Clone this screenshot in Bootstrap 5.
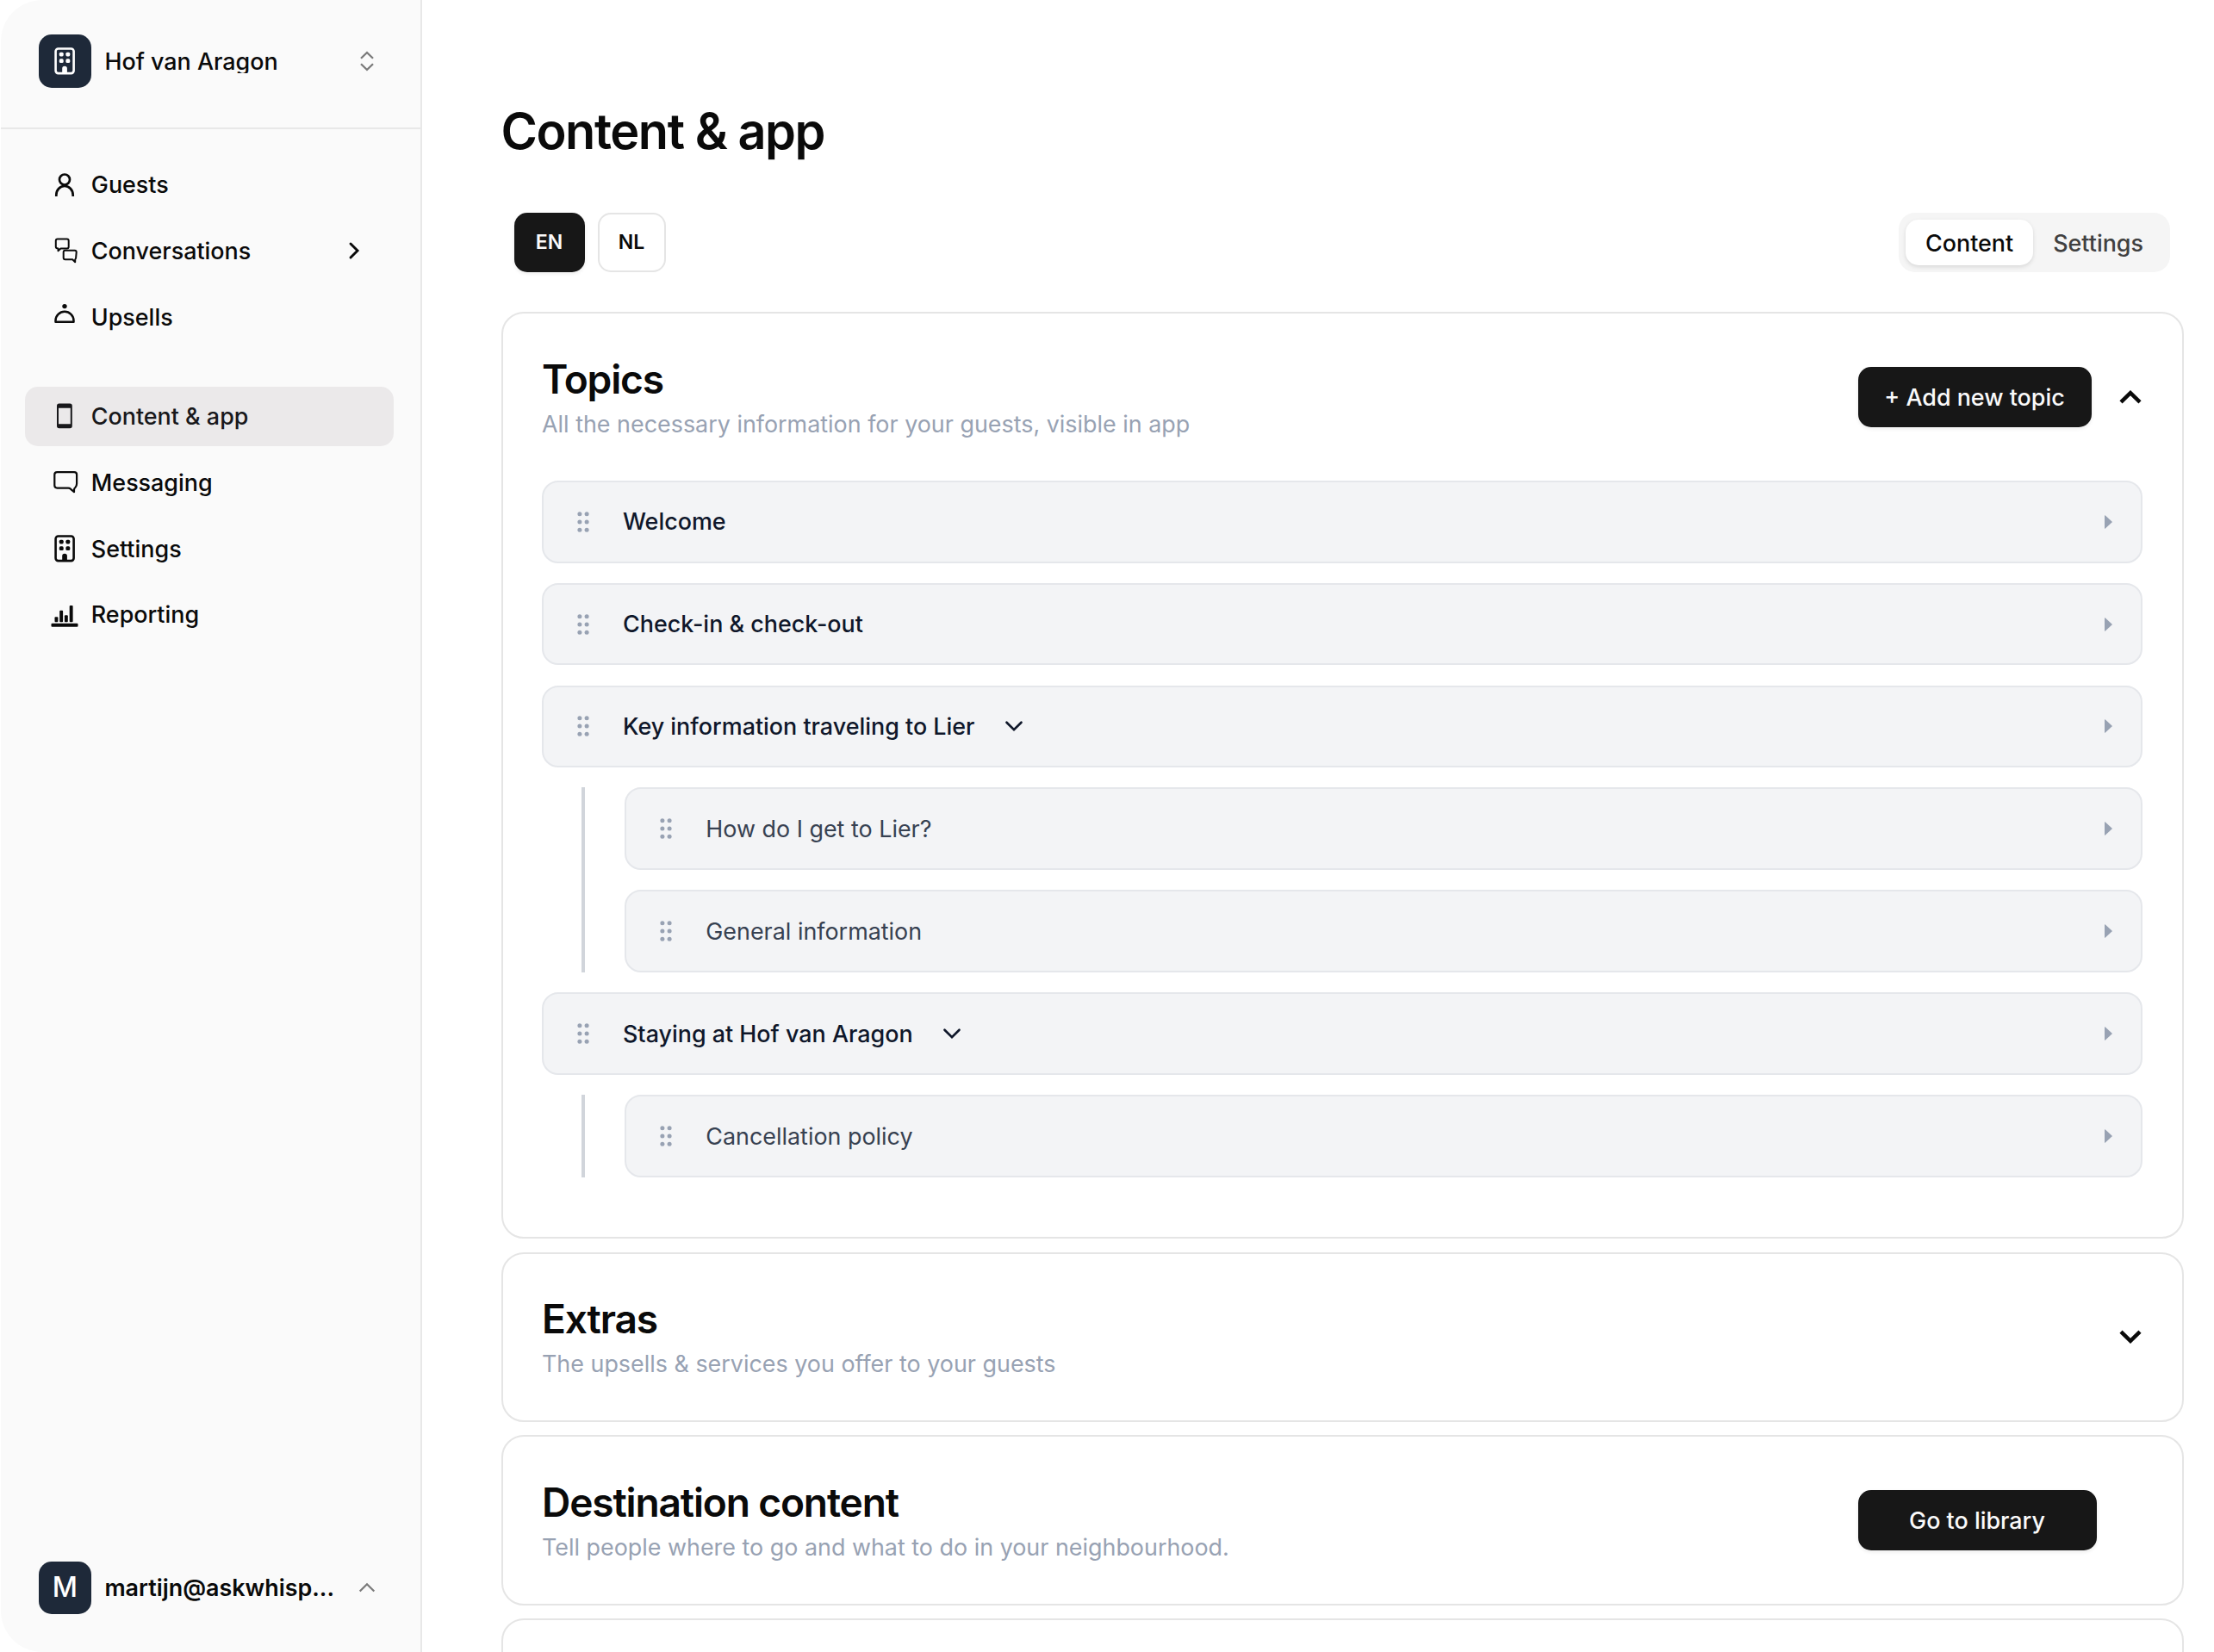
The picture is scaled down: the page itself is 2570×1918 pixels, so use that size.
<!DOCTYPE html>
<html lang="en">
<head>
    <meta charset="UTF-8">
    <meta name="viewport" content="width=device-width, initial-scale=1.0">
    <title>Content &amp; app</title>
    <link href="https://cdn.jsdelivr.net/npm/bootstrap@5.3.0/dist/css/bootstrap.min.css" rel="stylesheet">

    <style>
        body {
            font-family: Inter, "Liberation Sans", sans-serif;
            font-size: 26.9px;
            line-height: 38.4px;
            color: #0a0a0a;
            background: #ffffff;
        }

        svg {
            display: block;
            flex-shrink: 0;
        }

        .app {
            height: 1918px;
            overflow: hidden;
        }

        .weight-500 {
            font-weight: 500;
        }

        /* Sidebar */
        .sidebar {
            width: 489px;
            margin-left: 1px;
            background: #fafafa;
            border-right: 2px solid #e8e8e8;
            border-radius: 48px 0 0 48px;
        }

        .sidebar-top {
            height: 149.5px;
            padding: 40.3px 46px 0 43.5px;
            border-bottom: 2px solid #e8e8e8;
        }

        .sidebar-bottom {
            padding: 0 46px 44px 43.5px;
        }

        .avatar {
            width: 61.5px;
            height: 61.5px;
            border-radius: 15px;
            background: #1e2939;
            color: #ffffff;
            font-size: 32px;
        }

        .account-name {
            margin-left: 15.4px;
            line-height: 27px;
        }

        .side-nav {
            padding: 30.5px 31px 0 27.8px;
            gap: 7.8px;
        }

        .side-nav .nav-link {
            height: 69px;
            padding: 0 30px;
            gap: 15px;
            border-radius: 15px;
            color: #0a0a0a;
        }

        .side-nav .nav-link.active {
            background: #ebe9ea;
            color: #18181b;
        }

        .nav-group {
            margin-top: 38.4px;
        }

        /* Main column */
        .content {
            padding: 119.5px 35.5px 0 91.5px;
        }

        .page-title {
            font-size: 57.6px;
            line-height: 64px;
            letter-spacing: -0.025em;
        }

        .toolbar {
            padding: 0 15.5px 0 15px;
            margin-top: 63.3px;
            margin-bottom: 46px;
        }

        .btn-lang,
        .btn-dark-solid {
            height: 69.5px;
            border-radius: 15px;
            display: inline-flex;
            align-items: center;
            justify-content: center;
            padding: 0;
        }

        .btn-lang {
            width: 79px;
            font-size: 23px;
            border: 2px solid #e5e5e5;
            color: #0a0a0a;
        }

        .btn-dark-solid {
            background: #171717;
            color: #fafafa;
            border: 0;
            font-size: 26.9px;
            box-shadow: 0 2px 4px rgba(0, 0, 0, 0.08);
        }

        .btn-lang.btn-dark-solid {
            width: 82px;
            font-size: 23px;
        }

        .tabs {
            height: 69.5px;
            padding: 8px;
            background: #f5f5f5;
            border-radius: 19px;
        }

        .tabs .nav-link {
            height: 53.5px;
            padding: 0 23px;
            line-height: 54px;
            border-radius: 15px;
            color: #404040;
        }

        .tabs .nav-link.active {
            background: #ffffff;
            color: #0a0a0a;
            box-shadow: 0 2px 5px rgba(0, 0, 0, 0.12);
        }

        /* Collapsible sections */
        .section-card {
            border: 2px solid #e5e5e5;
            border-radius: 26px;
            padding: 0 46px 0 45.5px;
            margin-bottom: 15.4px;
        }

        .section-head {
            height: 193.5px;
        }

        .section-title {
            font-size: 46.1px;
            line-height: 46px;
            letter-spacing: -0.025em;
            margin: 6px 0 9.5px;
        }

        .section-note {
            color: #98a2b3;
        }

        /* Topic rows */
        .topics {
            gap: 23.1px;
            padding-bottom: 69.2px;
        }

        .topic {
            height: 95.8px;
            padding: 0 27.5px 0 31px;
            background: #f3f4f6;
            border: 2px solid #e5e7eb;
            border-radius: 19px;
            color: #0f172a;
        }

        .subtopics {
            gap: 23.1px;
            margin-left: 45.8px;
            padding-left: 46.5px;
            border-left: 4px solid #d1d5db;
        }

        .subtopics .topic {
            color: #374151;
        }

        .grip {
            margin-right: 31px;
        }

        .topic-toggle {
            margin-left: 34.5px;
        }
    </style>
</head>
<body>
    <!-- Shared icons -->
    <svg width="0" height="0" class="d-none">
        <symbol id="building" viewBox="0 0 32 32">
            <rect x="5.6" y="1.5" width="21" height="28.6" rx="3" fill="none" stroke="currentColor" stroke-width="2.6"/>
            <rect x="9.8" y="5.7" width="4.9" height="4.7" rx="1.6" fill="currentColor"/>
            <rect x="17.4" y="5.7" width="4.9" height="4.7" rx="1.6" fill="currentColor"/>
            <rect x="9.8" y="13.3" width="4.9" height="4.7" rx="1.6" fill="currentColor"/>
            <rect x="17.4" y="13.3" width="4.9" height="4.7" rx="1.6" fill="currentColor"/>
            <path d="M13.2 30v-5.4a2.8 2.8 0 0 1 5.7 0V30z" fill="currentColor"/>
        </symbol>
        <symbol id="grip" viewBox="0 0 30 30">
            <g fill="#98a2b3">
                <circle cx="10.9" cy="5.8" r="2.5"/><circle cx="19.1" cy="5.8" r="2.5"/>
                <circle cx="10.9" cy="15" r="2.5"/><circle cx="19.1" cy="15" r="2.5"/>
                <circle cx="10.9" cy="24.2" r="2.5"/><circle cx="19.1" cy="24.2" r="2.5"/>
            </g>
        </symbol>
        <symbol id="caret" viewBox="0 0 20 20">
            <path d="M6 2.8v14.4q0 1 .9.2l7.6-6.8q.6-.6 0-1.2L6.9 2.6q-.9-.8-.9.2z" fill="#98a2b3"/>
        </symbol>
        <symbol id="down" viewBox="0 0 22 22">
            <path d="M2.5 6.8l8.5 8.3 8.5-8.3" fill="none" stroke="currentColor" stroke-width="2.7" stroke-linecap="round"/>
        </symbol>
    </svg>

    <div class="app d-flex">
        <aside class="sidebar d-flex flex-column flex-shrink-0">
            <div class="sidebar-top d-flex align-items-start">
                <div class="d-flex align-items-center w-100">
                    <div class="avatar d-flex align-items-center justify-content-center flex-shrink-0">
                        <svg width="32" height="32"><use href="#building"/></svg>
                    </div>
                    <span class="account-name text-truncate weight-500">Hof van Aragon</span>
                    <svg class="ms-auto" width="32" height="32" viewBox="0 0 32 32" fill="none" stroke="#7a7a7a" stroke-width="2.3"><path d="M9 12.8l7-6.8 7 6.8M9 19.2l7 6.8 7-6.8"/></svg>
                </div>
            </div>

            <nav class="side-nav nav flex-column weight-500">
                <a class="nav-link d-flex align-items-center" href="#">
                    <svg width="32" height="32" viewBox="0 0 32 32" fill="none" stroke="currentColor" stroke-width="2.7"><circle cx="16" cy="9.5" r="6"/><path d="M6.3 29v-1.6a9.7 10.5 0 0 1 19.4 0V29"/></svg>
                    Guests
                </a>
                <a class="nav-link d-flex align-items-center" href="#">
                    <svg width="32" height="32" viewBox="0 0 32 32" fill="none" stroke="currentColor" stroke-width="2" stroke-linejoin="round"><path d="M7.8 2.6h10.9q2 0 2 2v6.8q0 2-2 2h-7.2l-3 2.8v-2.8q-2.7 0-2.7-2V4.6q0-2 2-2z"/><path d="M16.7 15.8h11q2 0 2 2l-.6 6.7q-.2 1.6-.9 1.7v3l-3-3h-8.5q-2 0-2-2v-6.4q0-2 2-2z"/></svg>
                    Conversations
                    <svg class="ms-auto" width="32" height="32" viewBox="0 0 32 32" fill="none" stroke="currentColor" stroke-width="2.9" stroke-linecap="round"><path d="M12 8l8 8-8 8"/></svg>
                </a>
                <a class="nav-link d-flex align-items-center" href="#">
                    <svg width="32" height="32" viewBox="0 0 32 32" fill="none" stroke="currentColor" stroke-width="2.5" stroke-linejoin="round"><circle cx="16" cy="3.6" r="2.7" fill="currentColor" stroke="none"/><path d="M5.5 21.7v-1.5a10.5 10.4 0 0 1 21 0v1.5z"/></svg>
                    Upsells
                </a>
                <a class="nav-link nav-group active d-flex align-items-center" href="#">
                    <svg width="32" height="32" viewBox="0 0 32 32"><path d="M9.6 1.5h12.6q2.6 0 2.6 2.600v23.500q0 2.600-2.600 2.600H9.600q-2.600 0-2.600-2.600V4.100q0-2.600 2.600-2.600zM9 6.800v18.400h13.800V6.800z" fill="currentColor" fill-rule="evenodd"/></svg>
                    Content &amp; app
                </a>
                <a class="nav-link d-flex align-items-center" href="#">
                    <svg width="32" height="32" viewBox="0 0 32 32" fill="none" stroke="currentColor" stroke-width="2.2" stroke-linejoin="round"><path d="M7.3 4.1h19.8q3 0 3 3v10.5q0 2.6-1.7 4.4-1.4 1.2-1.4 2.5v2.7l-3.9-3.4q-1.3-1.2-3-1.2H7.3q-3 0-3-3V7.1q0-3 3-3z"/></svg>
                    Messaging
                </a>
                <a class="nav-link d-flex align-items-center" href="#">
                    <svg width="32" height="32"><use href="#building"/></svg>
                    Settings
                </a>
                <a class="nav-link d-flex align-items-center" href="#">
                    <svg width="32" height="32" viewBox="0 0 32 32" fill="currentColor"><rect x=".5" y="25.7" width="31" height="4" rx="1"/><rect x="4.5" y="18.3" width="3.9" height="6" rx="1"/><rect x="10.2" y="10.7" width="3.9" height="13.6" rx="1"/><rect x="15.9" y="16.3" width="3.9" height="8" rx="1"/><rect x="21.7" y="5" width="3.9" height="19.3" rx="1"/></svg>
                    Reporting
                </a>
            </nav>

            <div class="sidebar-bottom d-flex align-items-center mt-auto">
                <div class="avatar d-flex align-items-center justify-content-center flex-shrink-0 weight-500">M</div>
                <span class="account-name fw-semibold">martijn@askwhisp...</span>
                <svg class="ms-auto" width="32" height="32" viewBox="0 0 32 32" fill="none" stroke="#7a7a7a" stroke-width="2.3"><path d="M7.700 20.500l8.300-8.200 8.300 8.200"/></svg>
            </div>
        </aside>

        <main class="content flex-grow-1">
            <h1 class="page-title fw-semibold mb-0">Content &amp; app</h1>

            <div class="toolbar d-flex justify-content-between">
                <div class="d-flex" style="gap: 15px">
                    <button class="btn btn-lang btn-dark-solid fw-semibold">EN</button>
                    <button class="btn btn-lang fw-semibold">NL</button>
                </div>
                <div class="tabs nav weight-500">
                    <a class="nav-link active" href="#">Content</a>
                    <a class="nav-link" href="#">Settings</a>
                </div>
            </div>

            <section class="section-card">
                <div class="section-head d-flex align-items-center">
                    <div class="me-auto">
                        <h2 class="section-title fw-semibold">Topics</h2>
                        <div class="section-note">All the necessary information for your guests, visible in app</div>
                    </div>
                    <button class="btn btn-dark-solid weight-500" style="width: 271px">+ Add new topic</button>
                    <svg width="28" height="28" viewBox="0 0 28 28" fill="none" stroke="#0a0a0a" stroke-width="4.5" style="margin-left: 31px"><path d="M3 19.8l11-10.6 11 10.6"/></svg>
                </div>

                <div class="topics d-flex flex-column">
                    <div class="topic d-flex align-items-center weight-500">
                        <svg class="grip" width="30" height="30"><use href="#grip"/></svg>
                        Welcome
                        <svg class="ms-auto" width="20" height="20"><use href="#caret"/></svg>
                    </div>
                    <div class="topic d-flex align-items-center weight-500">
                        <svg class="grip" width="30" height="30"><use href="#grip"/></svg>
                        Check-in &amp; check-out
                        <svg class="ms-auto" width="20" height="20"><use href="#caret"/></svg>
                    </div>
                    <div class="topic d-flex align-items-center weight-500">
                        <svg class="grip" width="30" height="30"><use href="#grip"/></svg>
                        Key information traveling to Lier
                        <svg class="topic-toggle" width="22" height="22"><use href="#down"/></svg>
                        <svg class="ms-auto" width="20" height="20"><use href="#caret"/></svg>
                    </div>
                    <div class="subtopics d-flex flex-column">
                        <div class="topic d-flex align-items-center">
                            <svg class="grip" width="30" height="30"><use href="#grip"/></svg>
                            How do I get to Lier?
                            <svg class="ms-auto" width="20" height="20"><use href="#caret"/></svg>
                        </div>
                        <div class="topic d-flex align-items-center">
                            <svg class="grip" width="30" height="30"><use href="#grip"/></svg>
                            General information
                            <svg class="ms-auto" width="20" height="20"><use href="#caret"/></svg>
                        </div>
                    </div>
                    <div class="topic d-flex align-items-center weight-500">
                        <svg class="grip" width="30" height="30"><use href="#grip"/></svg>
                        Staying at Hof van Aragon
                        <svg class="topic-toggle" width="22" height="22"><use href="#down"/></svg>
                        <svg class="ms-auto" width="20" height="20"><use href="#caret"/></svg>
                    </div>
                    <div class="subtopics d-flex flex-column">
                        <div class="topic d-flex align-items-center">
                            <svg class="grip" width="30" height="30"><use href="#grip"/></svg>
                            Cancellation policy
                            <svg class="ms-auto" width="20" height="20"><use href="#caret"/></svg>
                        </div>
                    </div>
                </div>
            </section>

            <section class="section-card">
                <div class="section-head d-flex align-items-center">
                    <div class="me-auto">
                        <h2 class="section-title fw-semibold">Extras</h2>
                        <div class="section-note">The upsells &amp; services you offer to your guests</div>
                    </div>
                    <svg width="28" height="28" viewBox="0 0 28 28" fill="none" stroke="#0a0a0a" stroke-width="4.5"><path d="M3 8.2l11 10.6 11-10.6"/></svg>
                </div>
            </section>

            <section class="section-card">
                <div class="section-head d-flex align-items-center">
                    <div class="me-auto">
                        <h2 class="section-title fw-semibold">Destination content</h2>
                        <div class="section-note">Tell people where to go and what to do in your neighbourhood.</div>
                    </div>
                    <button class="btn btn-dark-solid weight-500" style="width: 277px; margin-right: 53px">Go to library</button>
                </div>
            </section>

            <section class="section-card">
                <div class="section-head"></div>
            </section>
        </main>
    </div>

    <script src="https://cdn.jsdelivr.net/npm/bootstrap@5.3.0/dist/js/bootstrap.bundle.min.js"></script>
</body>
</html>
